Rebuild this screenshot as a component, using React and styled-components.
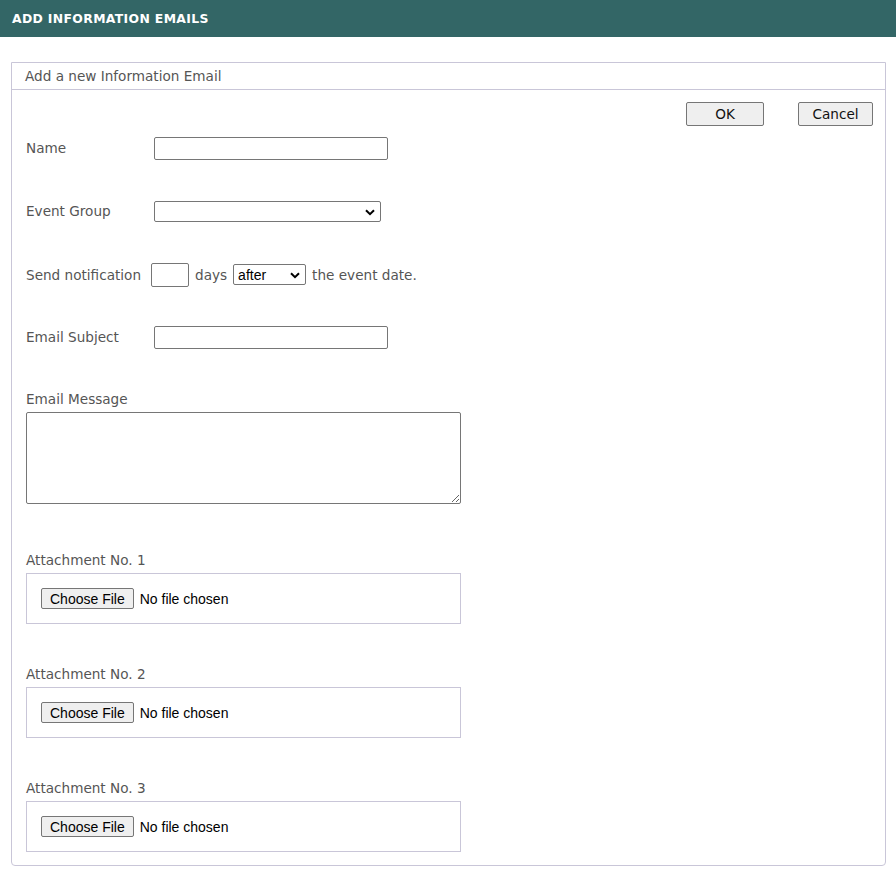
import React from "react";
import styled, { createGlobalStyle } from "styled-components";

const Global = createGlobalStyle`
  html, body { margin: 0; padding: 0; background: #ffffff; }
  body { font-family: "DejaVu Sans", Verdana, sans-serif; }
`;

const TitleBar = styled.div`
  height: 37px;
  background: #336666;
  color: #ffffff;
  display: flex;
  align-items: center;
  padding-left: 12px;
  font-family: "DejaVu Sans", Verdana, sans-serif;
  font-weight: bold;
  font-size: 12.4px;
  letter-spacing: 0.35px;
`;

const Panel = styled.div`
  margin: 25px 10px 0 11px;
  border: 1px solid #c9c6d8;
  border-radius: 0 0 4px 4px;
  padding-bottom: 13px;
`;

const PanelHead = styled.div`
  height: 26px;
  display: flex;
  align-items: center;
  padding-left: 13px;
  border-bottom: 1px solid #c9c6d8;
  color: #555555;
  font-size: 13.6px;
`;

const Body = styled.div`
  padding: 12px 12px 0 14px;
  display: flex;
  flex-direction: column;
`;

const ButtonBar = styled.div`
  display: flex;
  justify-content: flex-end;
  gap: 34px;
  height: 24px;
  margin-bottom: 11px;
`;

const ActionButton = styled.button`
  width: ${(p) => p.$w}px;
  height: 24px;
  background: #efefef;
  border: 1px solid #767676;
  border-radius: 2px;
  color: #111;
  font-family: "DejaVu Sans", Verdana, sans-serif;
  font-size: 13.6px;
  padding: 0;
`;

const Row = styled.div`
  display: flex;
  align-items: center;
  height: 23px;
  margin-bottom: ${(p) => p.$mb ?? 40}px;
  color: #555555;
  font-size: 13.6px;
`;

const Label = styled.div`
  width: 128px;
  flex: none;
  margin-top: -2px;
`;

const TextInput = styled.input`
  box-sizing: border-box;
  width: ${(p) => p.$w}px;
  height: ${(p) => p.$h ?? 23}px;
  border: 1px solid #767676;
  border-radius: 2px;
  margin: 0 0 0 ${(p) => p.$ml ?? 0}px;
  padding: 0 4px;
  font-family: "Liberation Sans", Arial, sans-serif;
  font-size: 13px;
`;

const SelectWrap = styled.div`
  position: relative;
  display: inline-flex;
  width: ${(p) => p.$w}px;
  height: ${(p) => p.$h ?? 21}px;
`;

const Select = styled.select`
  appearance: none;
  -webkit-appearance: none;
  box-sizing: border-box;
  width: 100%;
  height: 100%;
  border: 1px solid #767676;
  border-radius: 2px;
  margin: 0;
  padding: 0 20px 0 4px;
  background: #fff;
  color: #000;
  font-family: "Liberation Sans", Arial, sans-serif;
  font-size: 14px;
`;

const Chevron = styled.svg`
  position: absolute;
  right: 6px;
  top: 50%;
  width: 10px;
  height: 7px;
  margin-top: -3px;
  pointer-events: none;
`;

const InlineText = styled.span`
  margin: 0 6px;
`;

const BlockLabel = styled.div`
  color: #555555;
  font-size: 13.6px;
  line-height: 16px;
  margin-top: ${(p) => p.$mt}px;
  margin-bottom: 5px;
`;

const TextArea = styled.textarea`
  box-sizing: border-box;
  width: 435px;
  height: 92px;
  border: 1px solid #767676;
  border-radius: 2px;
  margin: 0;
  display: block;
`;

const FileBox = styled.div`
  box-sizing: border-box;
  width: 435px;
  height: 51px;
  border: 1px solid #c9c6d8;
  display: flex;
  align-items: center;
  padding-left: 14px;
`;

const FileInput = styled.input`
  font-family: "Liberation Sans", Arial, sans-serif;
  font-size: 14px;
  color: #000;
  &::file-selector-button {
    font-family: "Liberation Sans", Arial, sans-serif;
    font-size: 14px;
    background: #efefef;
    border: 1px solid #767676;
    border-radius: 2px;
    padding: 0 8px;
    margin-right: 6px;
    height: 21px;
    color: #000;
  }
`;

function DropSelect({ w, h, children }) {
  return (
    <SelectWrap $w={w} $h={h}>
      <Select>{children}</Select>
      <Chevron viewBox="0 0 10 7">
        <path d="M1 1.2 L5 5.2 L9 1.2" fill="none" stroke="#000" strokeWidth="2" />
      </Chevron>
    </SelectWrap>
  );
}

export default function App() {
  return (
    <>
      <Global />
      <TitleBar>ADD INFORMATION EMAILS</TitleBar>
      <Panel>
        <PanelHead>Add a new Information Email</PanelHead>
        <Body>
          <ButtonBar>
            <ActionButton $w={78}>OK</ActionButton>
            <ActionButton $w={75}>Cancel</ActionButton>
          </ButtonBar>
          <Row>
            <Label>Name</Label>
            <TextInput $w={234} />
          </Row>
          <Row>
            <Label>Event Group</Label>
            <DropSelect w={227}>
              <option></option>
            </DropSelect>
          </Row>
          <Row>
            <span>Send notification</span>
            <TextInput $w={38} $h={24} $ml={10} />
            <InlineText>days</InlineText>
            <DropSelect w={73}>
              <option>after</option>
              <option>before</option>
            </DropSelect>
            <InlineText>the event date.</InlineText>
          </Row>
          <Row $mb={0}>
            <Label>Email Subject</Label>
            <TextInput $w={234} />
          </Row>
          <BlockLabel $mt={42}>Email Message</BlockLabel>
          <TextArea />
          {[1, 2, 3].map((n) => (
            <React.Fragment key={n}>
              <BlockLabel $mt={n === 1 ? 48 : 42}>Attachment No. {n}</BlockLabel>
              <FileBox>
                <FileInput type="file" />
              </FileBox>
            </React.Fragment>
          ))}
        </Body>
      </Panel>
    </>
  );
}
